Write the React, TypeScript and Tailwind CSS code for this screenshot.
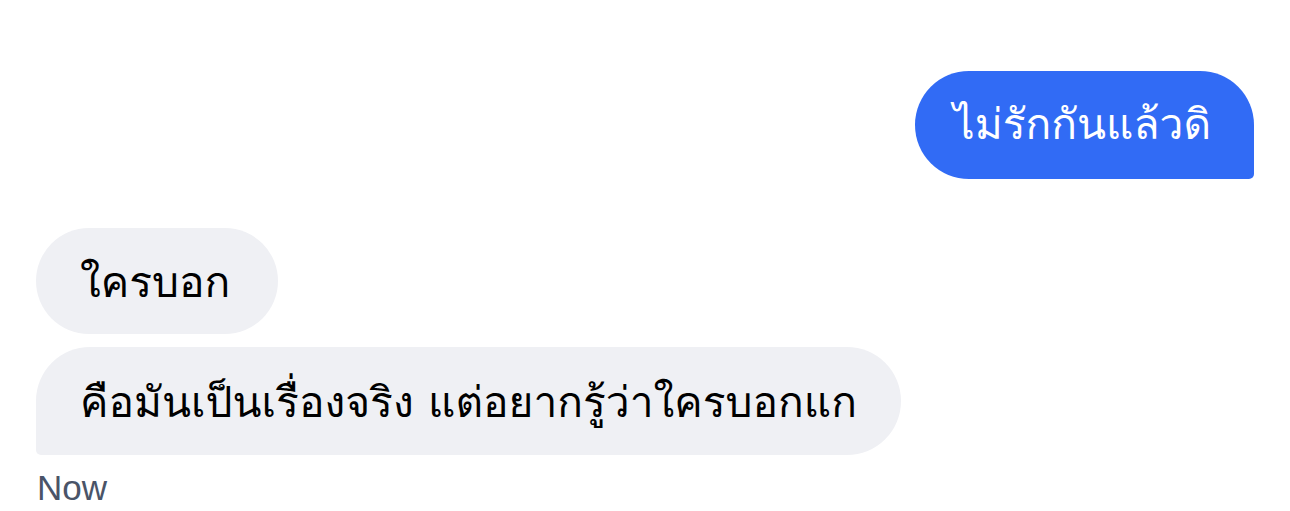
const thai = { fontFamily: 'Loma, "Noto Sans Thai Looped", "Noto Sans", sans-serif' };

export default function App() {
  return (
    <div className="h-[511px] w-[1290px] bg-white px-9">
      <div className="flex justify-end pt-[71px]">
        <div
          className="flex h-[108px] items-center rounded-[54px] rounded-br-[5px] bg-[#316bf5] pb-[2px] pl-[38px] pr-[43px] text-[42.5px] leading-none text-white"
          style={thai}
        >
          ไม่รักกันแล้วดิ
        </div>
      </div>
      <div className="mt-[49px] flex flex-col items-start gap-[13px]" style={thai}>
        <div className="flex h-[106px] items-center rounded-[53px] bg-[#eff0f4] pl-[44px] pr-[48px] pt-[2px] text-[42.5px] leading-none text-black">
          ใครบอก
        </div>
        <div className="flex h-[108px] items-center rounded-[54px] rounded-bl-[5px] bg-[#eff0f4] pl-[44px] pr-[44px] pt-[2px] text-[42.5px] leading-none text-black">
          คือมันเป็นเรื่องจริง แต่อยากรู้ว่าใครบอกแก
        </div>
      </div>
      <div
        className="mt-[15px] pl-px text-[35px] leading-[36px] text-[#4a5468]"
        style={{ fontFamily: '"Liberation Sans", Arial, sans-serif' }}
      >
        Now
      </div>
    </div>
  );
}
